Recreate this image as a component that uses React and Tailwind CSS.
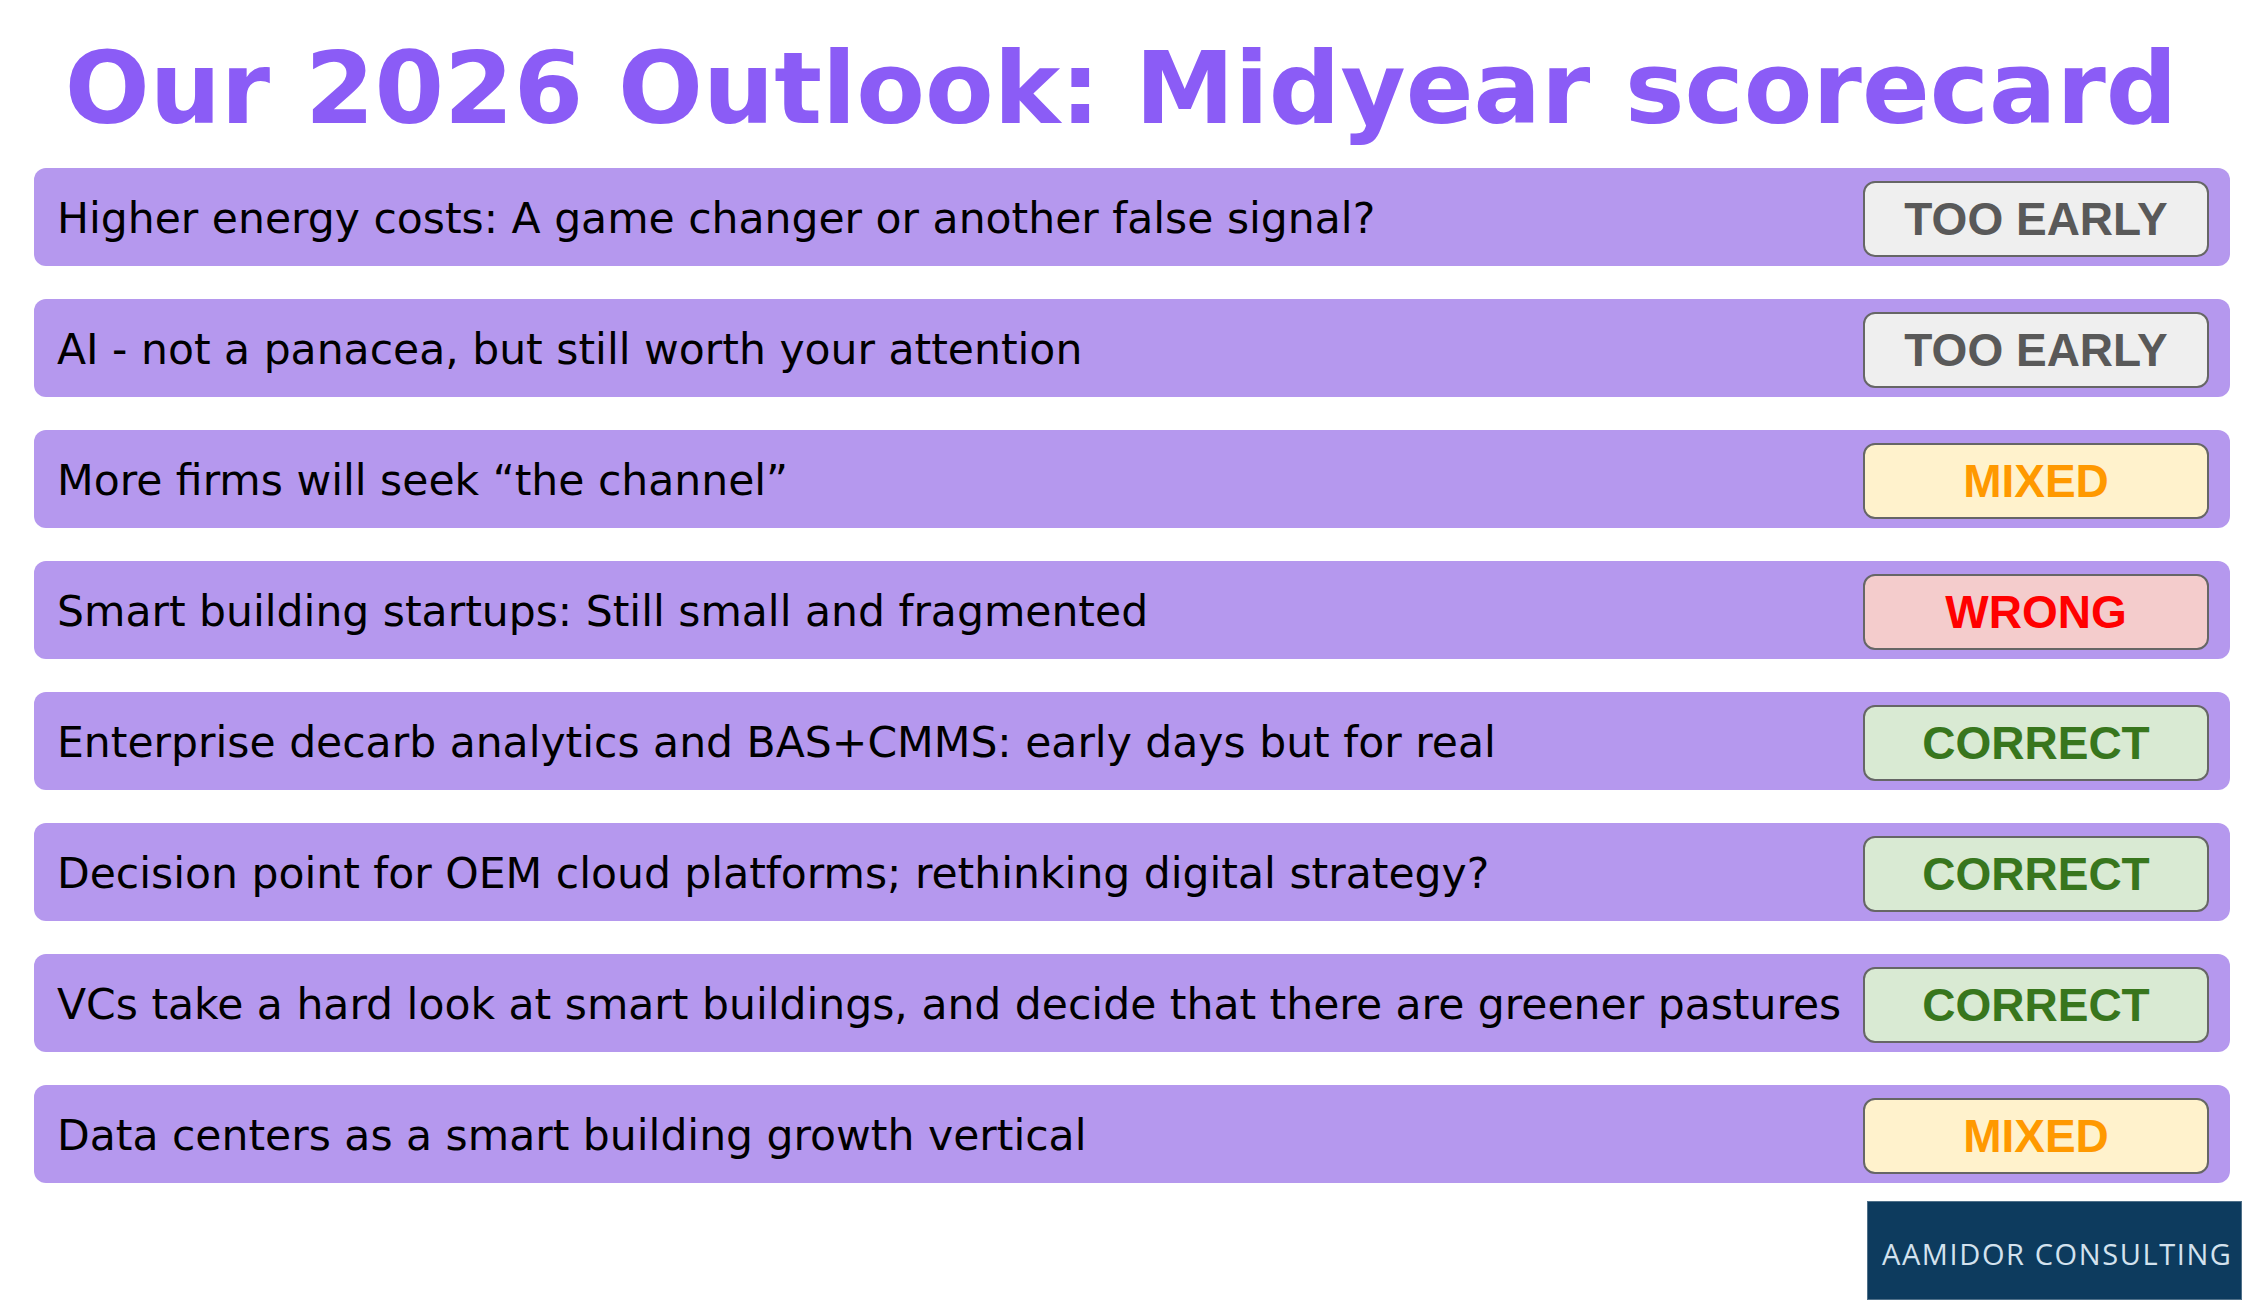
import React from "react";

const verdicts = {
  early: { label: "TOO EARLY", box: "bg-[#efefef]", text: "text-[#595959]" },
  mixed: { label: "MIXED", box: "bg-[#fff2cc]", text: "text-[#ff9900]" },
  wrong: { label: "WRONG", box: "bg-[#f4cccc]", text: "text-[#ff0000]" },
  correct: { label: "CORRECT", box: "bg-[#d9ead3]", text: "text-[#38761d]" },
};

const predictions = [
  { text: "Higher energy costs: A game changer or another false signal?", verdict: "early" },
  { text: "AI - not a panacea, but still worth your attention", verdict: "early" },
  { text: "More firms will seek \u201cthe channel\u201d", verdict: "mixed" },
  { text: "Smart building startups: Still small and fragmented", verdict: "wrong" },
  { text: "Enterprise decarb analytics and BAS+CMMS: early days but for real", verdict: "correct" },
  { text: "Decision point for OEM cloud platforms; rethinking digital strategy?", verdict: "correct" },
  { text: "VCs take a hard look at smart buildings, and decide that there are greener pastures", verdict: "correct" },
  { text: "Data centers as a smart building growth vertical", verdict: "mixed" },
];

const Badge = ({ verdict }) => {
  const v = verdicts[verdict];
  return (
    <div
      className={`mt-[4px] flex h-[76px] w-[346px] shrink-0 items-center justify-center rounded-[12px] border-2 border-[#666666] ${v.box}`}
    >
      <span className={`font-['Liberation_Sans',Arial,sans-serif] text-[46px] font-bold leading-none ${v.text}`}>
        {v.label}
      </span>
    </div>
  );
};

const App = () => {
  return (
    <div className="min-h-[1300px] w-full bg-white pt-[39px]">
      {/* Title */}
      <h1 className="text-center font-['DejaVu_Sans',sans-serif] text-[100px] font-bold leading-[100px] text-[#8b5cf6]">
        Our 2026 Outlook: Midyear scorecard
      </h1>

      {/* Scorecard rows */}
      <div className="ml-[34px] mr-[12px] mt-[29px] flex flex-col gap-[33px]">
        {predictions.map((p) => (
          <div
            key={p.text}
            className="flex h-[98px] items-center justify-between rounded-[12px] bg-[#b598ee] pl-[23px] pr-[21px]"
          >
            <p className="mt-[4px] whitespace-nowrap font-['DejaVu_Sans',sans-serif] text-[42.5px] leading-none text-black">
              {p.text}
            </p>
            <Badge verdict={p.verdict} />
          </div>
        ))}
      </div>

      {/* Logo */}
      <div className="mt-[18px] flex justify-end">
        <div className="flex h-[99px] w-[375px] items-center border border-[#4f7089] bg-[#0d3b5e] pl-[14px] pt-[5px]">
          <span className="whitespace-nowrap font-['Open_Sans',sans-serif] text-[29px] leading-none tracking-[1.6px] text-[#d3e2ee]">
            AAMIDOR CONSULTING
          </span>
        </div>
      </div>
    </div>
  );
};

export default App;
